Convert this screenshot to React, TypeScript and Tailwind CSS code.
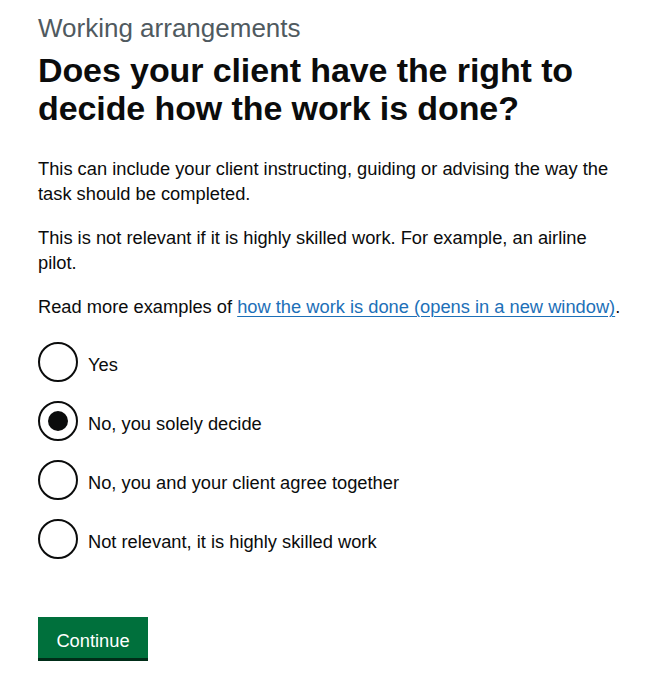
import { useState } from "react";

const options = [
  "Yes",
  "No, you solely decide",
  "No, you and your client agree together",
  "Not relevant, it is highly skilled work",
];

export default function App() {
  const [selected, setSelected] = useState<string>("No, you solely decide");

  return (
    <div className="min-h-screen bg-white text-[#0b0c0c] font-['Liberation_Sans',Arial,sans-serif]">
      <main className="pl-[38px] pt-[13px] w-[628px]">
        <span className="block text-[26px] leading-[30px] text-[#505a5f] mb-[8px]">
          Working arrangements
        </span>
        <h1 className="text-[34px] leading-[38px] font-bold tracking-[-0.1px] mb-[29px]">
          Does your client have the right to decide how the work is done?
        </h1>
        <p className="text-[18.3px] leading-[25px] mb-[19px]">
          This can include your client instructing, guiding or advising the way the task should be completed.
        </p>
        <p className="text-[18.3px] leading-[25px] mb-[19px]">
          This is not relevant if it is highly skilled work. For example, an airline pilot.
        </p>
        <p className="text-[18.3px] leading-[25px] mb-[23px]">
          Read more examples of{" "}
          <a href="#" className="text-[#1d70b8] underline decoration-1 underline-offset-[3px]">
            how the work is done (opens in a new window)
          </a>
          .
        </p>

        <div className="flex flex-col gap-[19px]">
          {options.map((opt) => (
            <label key={opt} className="flex items-center gap-[10px] h-[40px] cursor-pointer" onClick={() => setSelected(opt)}>
              <span className="w-[40px] h-[40px] rounded-full border-2 border-[#0b0c0c] bg-white flex items-center justify-center shrink-0">
                {selected === opt && <span className="w-[20px] h-[20px] rounded-full bg-[#0b0c0c]" />}
              </span>
              <span className="text-[18.3px] leading-[25px] pt-[4px]">{opt}</span>
            </label>
          ))}
        </div>

        <button
          type="button"
          className="mt-[58px] h-[41px] w-[110px] flex items-center justify-center pt-[5px] bg-[#00703c] text-white text-[18.3px] leading-[25px] shadow-[0_3px_0_#002d18]"
        >
          Continue
        </button>
      </main>
    </div>
  );
}
